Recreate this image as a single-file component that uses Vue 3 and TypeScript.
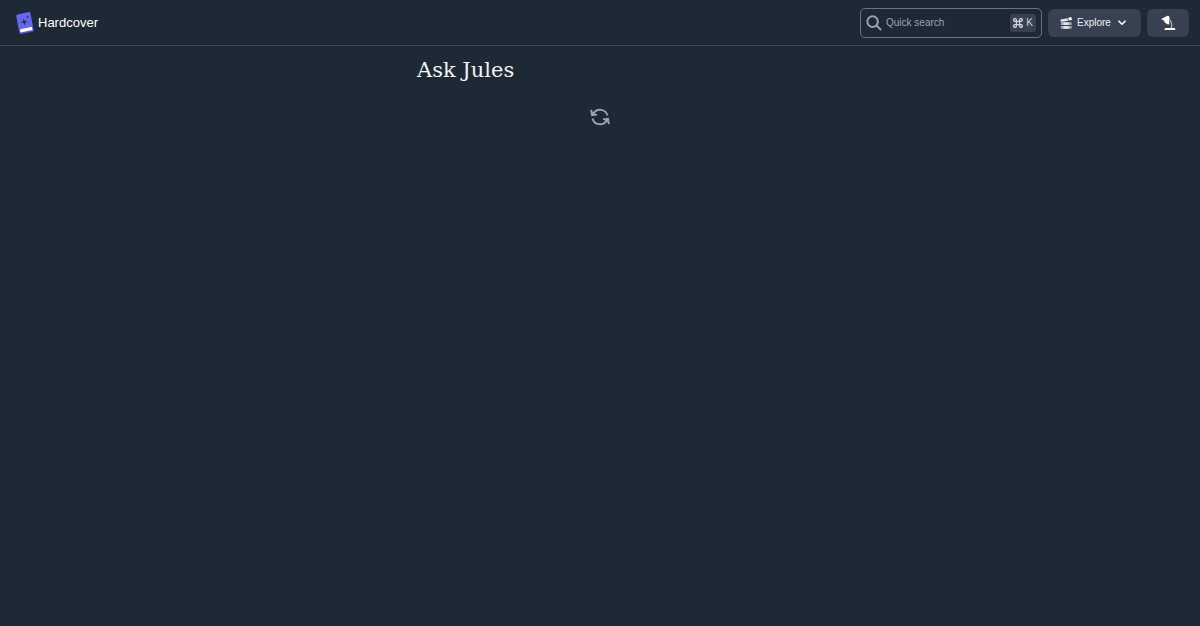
<script setup lang="ts">
import { ref } from 'vue'

const query = ref<string>('')
const loading = ref<boolean>(true)
</script>

<template>
  <div class="page">
    <header class="bar">
      <a class="brand" href="#">
        <svg class="logo" viewBox="0 0 18 24" aria-hidden="true">
          <path d="M1.4 3.4 12.6 1q1.5-.2 1.8 1l3.2 16.8q.2 1.3-1.1 1.6L5.2 23q-1.5.3-1.9-1L.3 5.2Q.1 3.8 1.4 3.4Z" fill="#6466f1" />
          <path d="M2.9 18.6 16.8 15.7l.8 3.6q0 .9-1 1.1L5.2 23q-1.5.3-1.9-1Z" fill="#5148e5" />
          <path d="M4.2 18.3 16.1 15.8q-.3 1.7.6 3.2L5 21.6q-1.6-1.6-.8-3.3Z" fill="#fff" />
          <path d="m7.6 7.5 1.2 2.4 2.9.4-2.5 1.4-.4 2.8-1.3-2.5-2.8-.4 2.5-1.4Z" fill="#252b5c" />
          <path d="m11.5 4.4.5 1 1.2.2-1 .7-.2 1.2-.7-1.1-1.1-.1 1-.8Z" fill="#252b5c" />
        </svg>
        <span>Hardcover</span>
      </a>

      <div class="actions">
        <label class="search">
          <svg class="search-icon" viewBox="0 0 16 16" fill="none" stroke="#9ca3af" stroke-width="2" aria-hidden="true">
            <circle cx="6.6" cy="6.6" r="5.3" />
            <path d="m10.5 10.5 4.6 4.6" />
          </svg>
          <input v-model="query" type="text" placeholder="Quick search" aria-label="Quick search" />
          <kbd>
            <svg class="command" viewBox="0 0 10 10" fill="none" stroke="#d1d5db" stroke-width="1.3" aria-hidden="true">
              <path d="M3.4 3.4H2.1A1.4 1.4 0 1 1 3.4 2V8A1.4 1.4 0 1 1 2.1 6.6H8A1.4 1.4 0 1 1 6.6 8V2A1.4 1.4 0 1 1 8 3.4Z" />
            </svg>
            <span>K</span>
          </kbd>
        </label>

        <button class="button explore" type="button">
          <svg class="shelf" viewBox="0 0 12 12" aria-hidden="true">
            <path d="m.4 2.4 7.2-1.2.4 2.6L.8 5Z" fill="#e2e5e9" />
            <path d="m8.2.8 3.2-.7.5 2.9-3.2.5Z" fill="#fff" />
            <path d="M.8 5.2h10.8v2.9H.8ZM.8 8.9h10.8v2.8H.8Z" fill="#a4abb6" />
            <path d="M3.4 5.2h5.3v2.9H3.4ZM3.4 8.9h5.3v2.8H3.4Z" fill="#dfe2e7" />
          </svg>
          <span class="explore-label">Explore</span>
          <svg class="chevron" viewBox="0 0 8 6" fill="none" stroke="#fff" stroke-width="1.6" stroke-linecap="round" stroke-linejoin="round" aria-hidden="true">
            <path d="m1 1.2 3 3 3-3" />
          </svg>
        </button>

        <button class="button lamp-button" type="button" aria-label="Toggle theme">
          <svg class="lamp" viewBox="0 0 16 16" aria-hidden="true">
            <path d="M.8 4.2 6 1.5 7.6.8q1.1-.2 1.5.8l.5 1.3q.3 1-.6 1.6L9.3 9.3 8 9.6Q7.2 8.6 5.6 8.2L4.5 7 3.9 5.6Q2.6 4.6.8 4.2Z" fill="#fff" />
            <path d="m9.3 4.5 1.6 2.2q1.6 2.8.2 6.6" fill="none" stroke="#a8afba" stroke-width="1.3" />
            <path d="M5.2 13h9.9v1.9H4.2Z" fill="#fff" />
          </svg>
        </button>
      </div>
    </header>

    <main class="content">
      <h1>Ask Jules</h1>
      <div v-if="loading" class="loading" role="status" aria-label="Loading">
        <svg class="refresh" viewBox="0 0 20 18" aria-hidden="true">
          <path d="M3.4 5.6A7.7 7.7 0 0 1 17.5 7.6M16.6 12.4A7.7 7.7 0 0 1 2.5 10.4" fill="none" stroke="#9ca3af" stroke-width="1.9" />
          <path d="M.2 2 2 1.8 3 4.8 7.2 6.2 7 7.6 1.2 8.3ZM19.8 16l-1.8.2-1-3-4.2-1.4.2-1.4 5.8-.7Z" fill="#9ca3af" />
        </svg>
      </div>
    </main>
  </div>
</template>

<style scoped>
.page {
  min-height: 100vh;
  background: #1e2936;
  color: #fff;
  font-family: "Liberation Sans", sans-serif;
}

.bar {
  box-sizing: border-box;
  height: 46px;
  padding: 0 11px 0 16px;
  display: flex;
  align-items: center;
  justify-content: space-between;
  border-bottom: 1px solid #3d4856;
}

.brand {
  display: flex;
  align-items: center;
  gap: 4px;
  color: #fff;
  font-size: 13px;
  line-height: 20px;
  text-decoration: none;
}

.logo {
  width: 18px;
  height: 24px;
}

.actions {
  display: flex;
  align-items: center;
  gap: 6px;
}

.search {
  box-sizing: border-box;
  width: 182px;
  height: 30px;
  padding: 0 5px;
  display: flex;
  align-items: center;
  gap: 4px;
  border: 1px solid #6b7280;
  border-radius: 5px;
}

.search-icon {
  flex: none;
  width: 16px;
  height: 16px;
}

.search input {
  flex: 1;
  min-width: 0;
  padding: 0;
  border: 0;
  outline: 0;
  background: transparent;
  color: #fff;
  font: 10px/16px "Liberation Sans", sans-serif;
}

.search input::placeholder {
  color: #9ca3af;
  opacity: 1;
}

kbd {
  box-sizing: border-box;
  height: 18px;
  padding: 0 3px;
  display: flex;
  align-items: center;
  gap: 3px;
  border-radius: 3px;
  background: #374151;
  color: #d1d5db;
  font: 10px/16px "Liberation Sans", sans-serif;
}

.command {
  width: 10px;
  height: 10px;
}

.button {
  height: 28px;
  border: 0;
  border-radius: 6px;
  display: flex;
  align-items: center;
  background: #374151;
  color: #f3f4f6;
  font: 10px/16px "Liberation Sans", sans-serif;
}

.explore {
  width: 93px;
  padding: 0 15px 0 12px;
  gap: 5px;
}

.explore-label {
  flex: 1;
  text-align: left;
}

.shelf {
  width: 12px;
  height: 12px;
}

.chevron {
  width: 8px;
  height: 6px;
}

.lamp-button {
  width: 42px;
  padding: 0;
  justify-content: center;
}

.lamp {
  width: 16px;
  height: 16px;
}

.content {
  max-width: 366px;
  margin: 0 auto;
  padding-top: 10px;
}

h1 {
  margin: 0;
  color: #f3f4f6;
  font: 400 21px/28px "DejaVu Serif", serif;
}

.loading {
  display: flex;
  justify-content: center;
  margin-top: 24px;
}

.refresh {
  width: 20px;
  height: 18px;
}
</style>

<style>
body {
  margin: 0;
  background: #1e2936;
}
</style>
